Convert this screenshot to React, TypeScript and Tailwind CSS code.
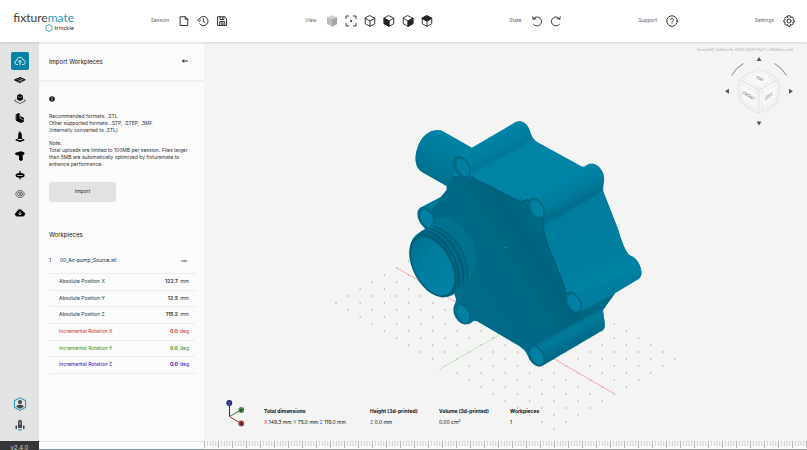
import type { ReactNode } from 'react';

type IconProps = { children: ReactNode; className?: string; box?: string };

function Icon({ children, className = 'size-3', box = '0 0 24 24' }: IconProps) {
  return (
    <svg
      className={className}
      viewBox={box}
      fill="none"
      stroke="currentColor"
      strokeWidth={1.8}
      strokeLinecap="round"
      strokeLinejoin="round"
      aria-hidden="true"
    >
      {children}
    </svg>
  );
}

/* Wireframe cube with an optional filled face */
function Cube({ face }: { face?: 'left' | 'right' | 'top' }) {
  return (
    <Icon>
      <path d="M12 1.5 21.5 6.5V17.5L12 22.5 2.5 17.5V6.5Z" />
      <path d="M2.5 6.5 12 12 21.5 6.5M12 12V22.5" />
      {face === 'left' && <path fill="currentColor" d="M2.5 6.5 12 12V22.5L2.5 17.5Z" />}
      {face === 'right' && <path fill="currentColor" d="M21.5 6.5 12 12V22.5L21.5 17.5Z" />}
      {face === 'top' && <path fill="currentColor" d="M2.5 6.5 12 1.5 21.5 6.5 12 12Z" />}
    </Icon>
  );
}

const menu: { label: string; items: { name: string; icon: ReactNode }[] }[] = [
  {
    label: 'Session',
    items: [
      { name: 'New session', icon: <Icon><path d="M5 3.5H14.5L19.5 8.5V21H5ZM14.5 3.5V8.5H19.5" /></Icon> },
      {
        name: 'History',
        icon: (
          <Icon>
            <path d="M4 9A9.3 9.3 0 1 1 5.5 18M1 9.5 4 13 7.5 10M12.5 7V12.5L16 15" />
          </Icon>
        ),
      },
      {
        name: 'Save',
        icon: (
          <Icon>
            <path d="M4 3.5H17.5L21 7V21H4ZM8 3.5V9H16V3.5M7.5 21V13H17.5V21M13 5.5V7M10.5 16H14.5M10.5 18.5H14.5" />
          </Icon>
        ),
      },
    ],
  },
  {
    label: 'View',
    items: [
      {
        name: 'Shaded',
        icon: (
          <Icon>
            <g stroke="none">
              <path fill="#bdbdbd" d="M12 1 22 5V18L12 23 2 18V5Z" />
              <path fill="#cfcfcf" d="M2 5 12 1 22 5 12 9Z" />
              <path fill="#a5a5a5" d="M12 9 22 5V18L12 23Z" />
            </g>
          </Icon>
        ),
      },
      {
        name: 'Fit to screen',
        icon: (
          <Icon>
            <path d="M2 7V2H7M17 2H22V7M22 17V22H17M7 22H2V17" />
            <circle cx="12" cy="12" r="1.2" fill="currentColor" />
          </Icon>
        ),
      },
      { name: 'Isometric', icon: <Cube /> },
      { name: 'Front', icon: <Cube face="left" /> },
      { name: 'Side', icon: <Cube face="right" /> },
      { name: 'Top', icon: <Cube face="top" /> },
    ],
  },
  {
    label: 'State',
    items: [
      { name: 'Undo', icon: <Icon><path d="M5 18.5A9 9 0 1 0 4.5 8M3.5 3.5 4.5 8.5 9.5 7.5" /></Icon> },
      { name: 'Redo', icon: <Icon><path d="M19 18.5A9 9 0 1 1 19.5 8M20.5 3.5 19.5 8.5 14.5 7.5" /></Icon> },
    ],
  },
  {
    label: 'Support',
    items: [
      {
        name: 'Help',
        icon: (
          <Icon>
            <circle cx="12" cy="12" r="10.5" />
            <path d="M9 9.5C9 5.5 15 5.5 15 9.5C15 12 12 11.8 12 14.5M12 17.3V17.6" />
          </Icon>
        ),
      },
    ],
  },
  {
    label: 'Settings',
    items: [
      {
        name: 'Settings',
        icon: (
          <Icon>
            <path d="M10 1.5H14L15 5 18.5 3.5 21 7 19.5 9.5 22.5 11V14L19.5 15 20.5 18 18 20.5 15 19 14 22.5H10L9 19 6 20.5 3.5 18 4.5 15 1.5 14V11L4.5 9.5 3 7 6 3.5 9 5Z" />
            <circle cx="12" cy="12" r="4" />
          </Icon>
        ),
      },
    ],
  },
];

const tools: { name: string; icon: ReactNode }[] = [
  {
    name: 'Import workpieces',
    icon: <path d="M7 19H5.5C0 18 1 11.5 5.5 11C6 3 16.5 2.5 18 9.5C24 10 24 19 18.5 19H17M12 20V11M9 14 12 11 15 14" />,
  },
  {
    name: 'Base plate',
    icon: (
      <>
        <path fill="currentColor" d="M1.5 11.5 12 7 22.5 11.5 12 17Z" />
        <path stroke="#e3e3e3" strokeWidth={1} d="M6 10.5 15 15M9 15 18 10.5M10 9 17 12.5" />
      </>
    ),
  },
  {
    name: 'Supports',
    icon: (
      <>
        <path fill="currentColor" d="M12 3 17 5.5V12.5L12 15 7 12.5V5.5Z" />
        <path strokeWidth={1.2} d="M4 13 1 15.5 12 21 23 15.5 20 13" />
        <path stroke="#e3e3e3" strokeWidth={1} d="M8 7 12 9 16 7" />
      </>
    ),
  },
  {
    name: 'Cutout',
    icon: (
      <>
        <path fill="currentColor" d="M5 5 10 3 12 9 19 12V19L13 21 5 17Z" />
        <path stroke="#e3e3e3" strokeWidth={1.3} d="M12 6V12L19 16" />
      </>
    ),
  },
  {
    name: 'Locator',
    icon: (
      <>
        <path fill="currentColor" d="M12 2 14.5 6V12L16 15H8L9.5 12V6Z" />
        <path strokeWidth={3} d="M4.5 17.5 12 20.5 19.500 17.5" />
      </>
    ),
  },
  { name: 'Clamp', icon: <path fill="currentColor" d="M4 6 14 3.5 20 5.5V8.5H16.5V20L14 21 11 19.5V10.5L7 10 4 9Z" /> },
  {
    name: 'Merge',
    icon: (
      <>
        <path fill="currentColor" d="M4 11C4 8.500 20 8.500 20 11V14.5C20 17 4 17 4 14.5Z" />
        <path d="M12 4.5V9M12 17V19.500" strokeWidth={2.5} />
        <path d="M7 13H17" stroke="#e3e3e3" strokeWidth={1.5} />
      </>
    ),
  },
  {
    name: 'Label',
    icon: (
      <g stroke="#555">
        <ellipse cx="12" cy="12" rx="8.5" ry="7" strokeDasharray="4 2" />
        <ellipse cx="12" cy="12" rx="5" ry="4" />
        <circle cx="12" cy="12" r="1" />
      </g>
    ),
  },
  {
    name: 'Download',
    icon: (
      <>
        <path fill="currentColor" d="M5.5 18C1 17 2 11.5 6 11C6.5 4 15.5 3.5 17.5 10C23 10.5 22.5 18 18 18Z" />
        <path stroke="#e3e3e3" d="M12 9.5V15M9.5 13 12 15.5 14.5 13" />
      </>
    ),
  },
];

const fields = [
  { label: 'Absolute Position X', value: '122.7', unit: 'mm', color: 'text-[#27414b]' },
  { label: 'Absolute Position Y', value: '12.5', unit: 'mm', color: 'text-[#27414b]' },
  { label: 'Absolute Position Z', value: '115.2', unit: 'mm', color: 'text-[#27414b]' },
  { label: 'Incremental Rotation X', value: '0.0', unit: 'deg', color: 'text-[#c8353c]' },
  { label: 'Incremental Rotation Y', value: '0.0', unit: 'deg', color: 'text-[#2f952f]' },
  { label: 'Incremental Rotation Z', value: '0.0', unit: 'deg', color: 'text-[#2620b4]' },
];

// Build plate: 19 x 11 points, projected isometrically
const plate = Array.from({ length: 19 * 11 }, (_, n) => {
  const i = n % 19;
  const j = Math.floor(n / 19);
  return { id: n, x: 336 + (i + j) * 12.1, y: 303 + (i - j) * 7 };
});

function Header() {
  return (
    <header className="relative z-10 flex h-[42px] shrink-0 items-center justify-between bg-white px-3 shadow-[0_1px_2px_rgba(0,0,0,0.12)]">
      <a href="/" className="flex w-[62px] flex-col items-end">
        <span className="font-[Lato] text-[12px] leading-[13px] text-[#3c3c3c]">
          fixture<span className="text-[#2a97b7]">mate</span>
        </span>
        <span className="flex items-center gap-px font-[Lato] text-[6px] leading-[8px] text-[#333]">
          <svg className="size-2" viewBox="0 0 16 16" fill="none" stroke="#2a97b7" strokeWidth="1.8" aria-hidden="true">
            <path d="M8 1 14 4.5V11.5L8 15 2 11.5V4.5Z" />
          </svg>
          trinckle
        </span>
      </a>
      {menu.map((group) => (
        <nav key={group.label} aria-label={group.label} className="flex items-center gap-[7px]">
          <span className="mr-[2px] text-[5px] text-[#666]">{group.label}</span>
          {group.items.map((item) => (
            <button key={item.name} type="button" aria-label={item.name} className="text-[#222]">
              {item.icon}
            </button>
          ))}
        </nav>
      ))}
    </header>
  );
}

function Sidebar() {
  return (
    <aside className="flex w-[39px] shrink-0 flex-col bg-[#e3e3e3]">
      <div className="flex flex-1 flex-col items-center gap-px pt-[10px]">
        {tools.map((tool, i) => (
          <button
            key={tool.name}
            type="button"
            aria-label={tool.name}
            className={`flex size-[18px] items-center justify-center rounded-xs ${
              i === 0 ? 'bg-[#0083a5] text-white' : 'text-black'
            }`}
          >
            <Icon>{tool.icon}</Icon>
          </button>
        ))}
      </div>
      <div className="flex flex-col items-center gap-2 pb-[10px]">
        <button type="button" aria-label="Account">
          <Icon className="block size-[14px]">
            <path stroke="#2a97b7" d="M12 1 21.5 6.5V17.5L12 23 2.5 17.5V6.5Z" />
            <g fill="#444" stroke="none">
              <circle cx="12" cy="8.5" r="3.5" />
              <path d="M5.5 16.5C7 12 17 12 18.5 16.5L12 20Z" />
            </g>
          </Icon>
        </button>
        <button type="button" aria-label="Getting started">
          <Icon className="block size-3">
            <path fill="#444" stroke="none" d="M8 18V6C9 0 15 0 16 6V18ZM3 13H6V20H3ZM18 13H21V20H18Z" />
            <path stroke="#ddd" d="M12 6V11" />
            <path stroke="#2a97b7" strokeWidth={2.5} d="M9 21.5H15" />
          </Icon>
        </button>
      </div>
      <div className="h-[9px] overflow-hidden bg-[#363636] pt-[3px] text-center text-[6px] leading-[8px] text-[#ccc]">
        v2.4.0
      </div>
    </aside>
  );
}

function ImportPanel() {
  return (
    <section className="flex w-[165px] shrink-0 flex-col bg-[#fbfbfb] text-[#333]">
      <div className="flex h-[39px] items-center justify-between border-b border-[#eee] pr-4 pl-[10px] shadow-[0_1px_1px_rgba(0,0,0,0.04)]">
        <h1 className="text-[6px] text-[#111]">Import Workpieces</h1>
        <button type="button" aria-label="Collapse panel" className="text-[#111]">
          <Icon className="block h-1 w-[6px]" box="0 0 12 8"><path d="M11 4H1M4 1.5 1 4 4 6.5" /></Icon>
        </button>
      </div>
      <div className="flex-1 pt-[15px] pr-[9px] pl-[10px]">
        <button type="button" aria-label="Information" className="block">
          <Icon className="block size-[6px]">
            <circle cx="12" cy="12" r="11" fill="#111" stroke="none" />
            <path stroke="#fff" strokeWidth={3} d="M12 6V7M12 11V18" />
          </Icon>
        </button>
        <div className="mt-[11px] flex flex-col gap-[6px] text-[5px] leading-[7px] text-[#333]">
          <p>
            Recommended formats: .STL
            <br />
            Other supported formats: .STP, .STEP, .3MF
            <br />
            (Internally converted to .STL)
          </p>
          <p>
            Note:
            <br />
            Total uploads are limited to 100MB per session. Files larger than 5MB are automatically
            optimized by fixturemate to enhance performance.
          </p>
        </div>
        <button
          type="button"
          className="mt-[14px] block h-5 w-[67px] rounded-xs bg-[#e2e2e2] text-[5px] text-[#12303c]"
        >
          Import
        </button>
        <h2 className="mt-7 text-[6px] leading-[10px] text-[#111]">Workpieces</h2>
        <div className="mt-3 flex h-[18px] items-center text-[5px] text-[#12303c]">
          <span className="w-[11px]">1</span>
          <span className="flex-1">00_Air-pump_Source.stl</span>
          <button type="button" aria-label="Workpiece options" className="mr-2">
            <Icon className="block h-1 w-[6px]" box="0 0 12 8"><path d="M1 4H2.5M5 4H11" /></Icon>
          </button>
        </div>
        <div className="mt-[3px] grid h-[100px] grid-rows-6 text-[5px]">
          {fields.map((f) => (
            <label key={f.label} className={`flex items-center border-t border-[#ebebeb] pr-[6px] pl-[10px] ${f.color}`}>
              <span className="flex-1 whitespace-nowrap">{f.label}</span>
              <input defaultValue={f.value} className="w-8 bg-transparent text-right font-bold" />
              <span className="w-[11px] text-right">{f.unit}</span>
            </label>
          ))}
        </div>
        <div className="border-t border-[#ebebeb]" />
      </div>
      <div className="h-[9px] border-t border-b border-t-[#e8e8e8] border-b-[#7d8b90] bg-white" />
    </section>
  );
}

/* Bolt boss seen from the front: rim plus the lit inside of the bore */
function Boss({ x, y }: { x: number; y: number }) {
  return (
    <g transform={`translate(${x} ${y}) rotate(-28)`}>
      <ellipse rx="7.6" ry="11.6" fill="#00647f" />
      <ellipse rx="6.2" ry="10.2" fill="#007290" />
      <ellipse cx="0.8" cy="1" rx="5.3" ry="9" fill="#0081a3" />
    </g>
  );
}

function Scene() {
  return (
    <svg
      className="absolute inset-0 size-full"
      viewBox="204 42 603 408"
      preserveAspectRatio="xMidYMid slice"
      role="img"
      aria-label="Air pump workpiece on the build plate"
    >
      <defs>
        <linearGradient id="front" gradientUnits="userSpaceOnUse" x1="440" y1="310" x2="550" y2="240">
          <stop offset="0" stopColor="#006b89" />
          <stop offset="0.6" stopColor="#006985" />
          <stop offset="0.85" stopColor="#00637d" />
          <stop offset="1" stopColor="#006985" />
        </linearGradient>
        <linearGradient id="tube" gradientUnits="userSpaceOnUse" x1="566" y1="178" x2="582" y2="208">
          <stop offset="0" stopColor="#0084a7" />
          <stop offset="0.5" stopColor="#007c9c" />
          <stop offset="0.8" stopColor="#006d8a" />
          <stop offset="1" stopColor="#007b9c" />
        </linearGradient>
        <linearGradient id="topTube" gradientUnits="userSpaceOnUse" x1="490" y1="137" x2="502" y2="160">
          <stop offset="0" stopColor="#0084a7" />
          <stop offset="0.6" stopColor="#007d9e" />
          <stop offset="0.8" stopColor="#007795" />
          <stop offset="1" stopColor="#0083a5" />
        </linearGradient>
        <linearGradient id="side" gradientUnits="userSpaceOnUse" x1="575" y1="215" x2="605" y2="292">
          <stop offset="0" stopColor="#007c9d" />
          <stop offset="0.6" stopColor="#007fa0" />
          <stop offset="0.85" stopColor="#0083a5" />
          <stop offset="1" stopColor="#007c9c" />
        </linearGradient>
        <linearGradient id="lowTube" gradientUnits="userSpaceOnUse" x1="565" y1="323" x2="578" y2="347">
          <stop offset="0" stopColor="#006580" />
          <stop offset="0.35" stopColor="#007b9b" />
          <stop offset="0.7" stopColor="#006f8d" />
          <stop offset="1" stopColor="#006780" />
        </linearGradient>
        <linearGradient id="inlet" gradientUnits="userSpaceOnUse" x1="455" y1="138" x2="434" y2="178">
          <stop offset="0" stopColor="#0083a6" />
          <stop offset="0.5" stopColor="#007b9b" />
          <stop offset="1" stopColor="#00718f" />
        </linearGradient>
        <linearGradient id="bore" x1="0.3" y1="0" x2="0.6" y2="1">
          <stop offset="0" stopColor="#00708d" />
          <stop offset="0.35" stopColor="#007c9d" />
          <stop offset="1" stopColor="#0083a5" />
        </linearGradient>
      </defs>

      {plate.map((p) => (
        <rect key={p.id} x={p.x - 0.6} y={p.y - 0.5} width="1.2" height="1" fill="#8d8d8d" />
      ))}
      <path d="M397 268 614 393.5" stroke="#f29a96" strokeWidth="0.8" />
      <path d="M439 369.5 520 323" stroke="#a9eaa0" strokeWidth="0.8" />

      {/* body silhouette */}
      <path
        fill="#0083a5"
        d="M438 130Q441 130 444 132L471.7 147.7 516 122Q522 119.5 526.7 125C531 130 530 137 536.7 141.7L580 165.5Q583 168 587 165C593 161 600 166 603 173C606 181 602 186 603.5 192L618.3 230C622 243 625 250 629 255Q635 257 638 262C642 269 643 276 638.5 279L615 293.3 603 310C603 317 607 327 603 330L543 365.5C534 370 529 357 525 351Q522 347 515 343.5L480 322.7Q474 318.5 471 323C464 328 456 318 454 310Q454 305 456 300L455 293Q449 299 440 295.5C424 288 409 266 410 248Q411 237 420 232L425 229C419 222 417 214 420 208L441 197 446.7 190V186L422 172C414 167 414 155 419 144C424 133 432 130 438 130Z"
      />
      {/* inlet pipe */}
      <path
        fill="url(#inlet)"
        d="M438 130Q441 130 444 132L471.7 147.7 456 160 454 176 446.7 186 422 172C414 167 414 155 419 144C424 133 432 130 438 130Z"
      />
      <path d="M427 134C418 142 414 158 422 172M431 135C422 143 418 160 426 174" fill="none" stroke="#00708e" strokeWidth="0.7" opacity="0.4" />
      <path fill="url(#topTube)" d="M460 156 516 122Q522 119.5 526.7 125C530 129 530 134 533 139L475 176 466 158Z" />
      <path fill="url(#tube)" d="M533 198 585 166.5C593 161 600 166 603 173C605 180 602 184 603 191L543 229Z" />
      <path
        fill="url(#side)"
        d="M543 228.5 603.2 191.5 618.3 230C622 243 625 250 629 255Q635 257 638 262C642 269 643 276 638.5 279L580 313 565 285 553 257Z"
      />

      {/* front plate */}
      <path
        fill="url(#front)"
        d="M454 176 468 177Q474 177 480 182L520 201Q526 199 530 200L543 218C542 236 553 257 560 275Q564 286 566 292L580 312 615 293.3 603 310 600 314 541 347 526 352Q522 347 515 343.5L480 322.7Q474 318.5 471 323L458 305 434 230 425 209 441 197 446.7 190V185Z"
      />
      <path
        fill="none"
        stroke="#005e77"
        strokeWidth="1.3"
        d="M471 176Q476 181 484 183L518 201Q524 203 528 199M543 218C541 234 554 260 560 275Q563 284 566 290"
      />
      <path fill="url(#lowTube)" d="M536 344 603 308C603 317 607 327 603 330L541 366Z" />

      {/* lower-left corner boss */}
      <path fill="#007b9c" d="M420 208 441 197Q434 208 430 211Z" />
      <Boss x={462} y={167} />
      <Boss x={536} y={208.5} />
      <Boss x={573} y={302.5} />
      <Boss x={536} y={355.5} />
      <Boss x={462} y={313.5} />
      <Boss x={426} y={218} />

      {/* threaded outlet */}
      <path fill="#00728f" d="M428 229Q434 217 443 217C462 216 480 246 476 268L462 286 434 294Z" />
      <path fill="#00657f" d="M413 240Q422 228 432 227C449 226 472 258 466 280L454 293 440 294Z" />
      <g fill="none" stroke="#00566e" strokeWidth="0.8">
        <path d="M434 227C452 229 472 257 467 279" />
        <path d="M430 229C447 231 467 260 463 283" />
        <path d="M426 231C442 233 462 260 459 287" />
      </g>
      <g fill="none" stroke="#00809f" strokeWidth="0.6">
        <path d="M432 228C449 230 469 258 465 281" />
        <path d="M428 230C444 232 464 260 461 285" />
      </g>
      <g transform="translate(433 266) rotate(-28)">
        <ellipse rx="20" ry="34" fill="#005f78" />
        <ellipse cx="-0.5" rx="18" ry="31.5" fill="url(#bore)" />
      </g>
      <circle cx="505.8" cy="247.3" r="2" fill="#00809f" stroke="#00566e" strokeWidth="1" />
    </svg>
  );
}

function ViewCube() {
  return (
    <svg
      className="absolute top-[14px] right-[13px] h-[70px] w-[70px]"
      viewBox="724 56 70 70"
      role="img"
      aria-label="View cube"
    >
      <g fill="#555">
        <path d="M759 57 756.5 61H761.5ZM759 125.5 756.5 121.5H761.5ZM725 91.2 729 88.7V93.7ZM793 91.2 789 88.7V93.7Z" />
      </g>
      <path d="M731.5 75.5Q736 67.5 743.5 63.5M774.5 63.5Q782 67.5 786.5 75.5" fill="none" stroke="#666" strokeWidth="0.8" />
      <circle cx="759" cy="91" r="22" fill="#efefef" />
      <g fill="#f8f8f8" stroke="#d5d5d5" strokeWidth="0.5">
        <path d="M759 69 779 79.5 759 90 739 79.5Z" />
        <path d="M739 79.5 759 90V113L740.5 101.5Z" />
        <path d="M779 79.5 759 90V113L777.5 101.5Z" />
      </g>
      <path
        d="M742 81V102M756 88V111M762 88V111M776 81V102M739 83 759 94 779 83M741 99 759 110 777 99M742 78 762 89M776 78 756 89M756 70.5 776 81M762 70.5 742 81"
        fill="none"
        stroke="#d0d0d0"
        strokeWidth="0.4"
        strokeDasharray="1.5 0.8"
      />
      <g fill="#666" fontSize="4" textAnchor="middle">
        <text transform="translate(759 80) rotate(25)">TOP</text>
        <text transform="translate(748 97) rotate(32)">FRONT</text>
        <text transform="translate(769.5 97.5) rotate(-32)">LEFT</text>
      </g>
    </svg>
  );
}

function AxisGizmo() {
  return (
    <svg className="h-7 w-5" viewBox="226 400 20 28" aria-hidden="true">
      <g strokeWidth="1" fill="none">
        <path d="M229.5 416.5V403" stroke="#20208a" />
        <path d="M229.5 416.5 241 410" stroke="#3f7f46" />
        <path d="M229.5 416.5 241 423.5" stroke="#a33a3a" />
      </g>
      <circle cx="229.3" cy="403" r="2.9" fill="#20208a" />
      <circle cx="241.3" cy="410" r="2.9" fill="#4a8a50" />
      <circle cx="241.3" cy="423.5" r="2.9" fill="#a94442" />
      <g fontSize="4" fontWeight="700" textAnchor="middle" fill="#111">
        <text x="229.3" y="404.5" fill="#8f8fd0">Z</text>
        <text x="241.3" y="411.5">Y</text>
        <text x="241.3" y="425">X</text>
      </g>
    </svg>
  );
}

function Viewport() {
  return (
    <main className="relative flex min-w-0 flex-1 flex-col justify-end bg-[#f4f4f4]">
      <Scene />
      <p className="absolute top-[5px] right-[14px] font-[Lato] text-[4px] leading-[6px] text-[#b0b0b0]">
        SessionID: 8c8aca7b-4042-4639-9b47-c494b9aeece8
      </p>
      <ViewCube />
      <div className="relative mb-[13px] flex items-center pl-[22px] text-[5px] leading-[8px] text-[#111]">
        <AxisGizmo />
        <dl className="mt-1 ml-[18px] flex [&_dd]:mt-[3px] [&_dt]:font-bold">
          <div className="w-[106px]">
            <dt>Total dimensions</dt>
            <dd>
              <span className="text-red-500">X</span> 149.3 mm <span className="text-green-600">Y</span> 75.0 mm{' '}
              <span className="text-blue-600">Z</span> 119.0 mm
            </dd>
          </div>
          <div className="w-[69px]">
            <dt>Height (3d-printed)</dt>
            <dd><span className="text-blue-600">Z</span> 0.0 mm</dd>
          </div>
          <div className="w-[71px]">
            <dt>Volume (3d-printed)</dt>
            <dd>0.00 cm³</dd>
          </div>
          <div>
            <dt>Workpieces</dt>
            <dd>1</dd>
          </div>
        </dl>
      </div>
      <svg className="relative block h-[9px] w-full shrink-0" aria-hidden="true">
        <defs>
          <pattern id="ticks" width="14" height="9" patternUnits="userSpaceOnUse">
            <path d="M0.5 0V7" stroke="#b5b5b5" strokeWidth="1" />
            <path d="M3.5 0V5M6.5 0V5M9 0V5M11.7 0V5" stroke="#d6d6d6" strokeWidth="1.2" />
          </pattern>
        </defs>
        <rect width="100%" height="9" fill="#f9f9f9" />
        <rect width="100%" height="9" fill="url(#ticks)" />
        <rect y="8" width="100%" height="1" fill="#9a9a9a" />
      </svg>
    </main>
  );
}

export default function App() {
  return (
    <div className="flex h-screen flex-col overflow-hidden font-[Inter,sans-serif]">
      <Header />
      <div className="flex min-h-0 flex-1">
        <Sidebar />
        <ImportPanel />
        <Viewport />
      </div>
    </div>
  );
}
